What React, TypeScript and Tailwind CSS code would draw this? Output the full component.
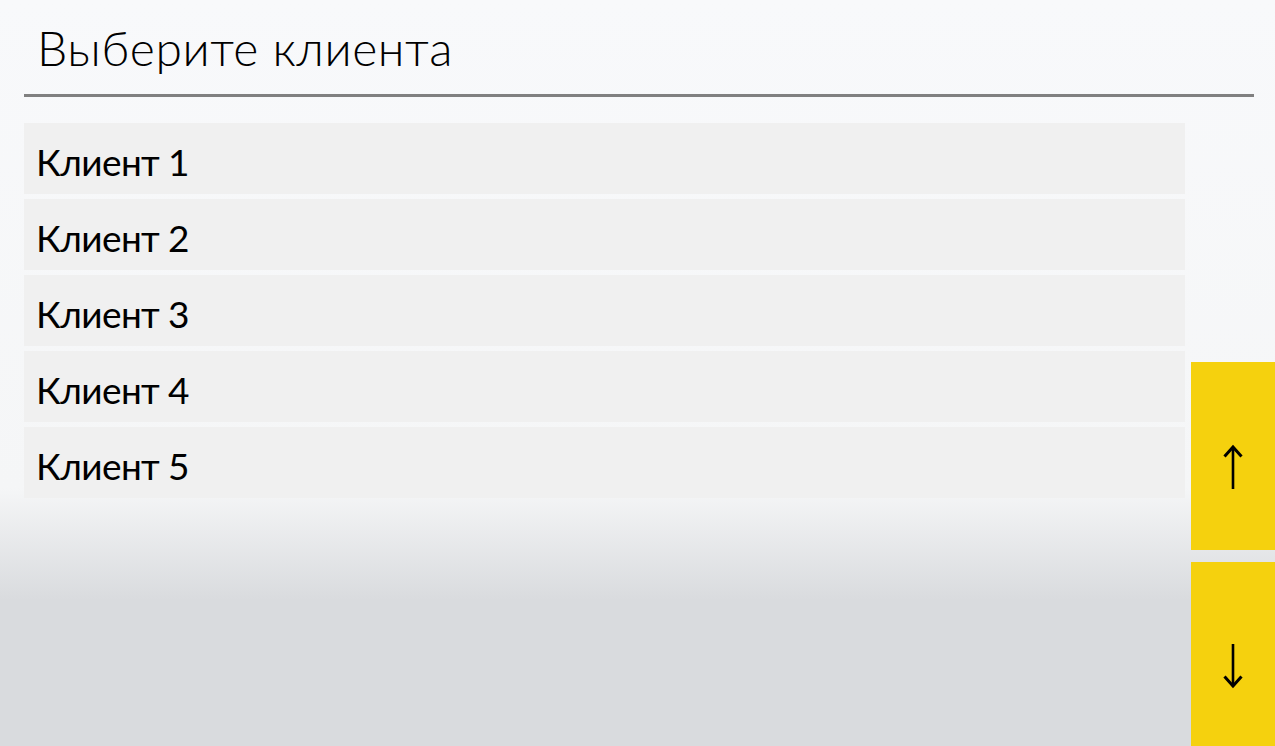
import React from 'react';

const clients = ['Клиент 1', 'Клиент 2', 'Клиент 3', 'Клиент 4', 'Клиент 5'];

const Arrow = ({ down = false }: { down?: boolean }) => (
  <svg width="24" height="46" viewBox="0 0 24 46" className={down ? 'rotate-180' : ''}>
    <path d="M12 3 V45" stroke="#000" strokeWidth={2.6} fill="none" />
    <path d="M3.5 12.5 L12 3 L20.5 12.5" stroke="#000" strokeWidth={3} fill="none" strokeLinejoin="miter" />
  </svg>
);

export default function App() {
  return (
    <div
      className="h-screen w-full overflow-hidden flex flex-col bg-[linear-gradient(to_bottom,#f8f9fb_0px,#f5f6f7_488px,#d9dbde_600px,#d9dbde_746px)] text-black"
      style={{ fontFamily: 'Lato, "Noto Sans", sans-serif' }}
    >
      {/* шапка */}
      <div className="ml-6 mr-[21px] h-[97px] shrink-0 border-b-[3px] border-[#808080] flex items-start">
        <h1 className="pl-[13px] pt-[24px] text-[48px] leading-none font-light tracking-[0.6px]">
          Выберите клиента
        </h1>
      </div>

      <div className="flex-1 flex pt-[26px] min-h-0">
        {/* список */}
        <div className="flex-1 ml-6 flex flex-col gap-[5px]">
          {clients.map((c) => (
            <div key={c} className="h-[71px] shrink-0 bg-[#f0f0f0] flex items-center pl-3 pt-[6px]">
              <span className="text-[37px] leading-none tracking-[-0.6px]">{c}</span>
            </div>
          ))}
        </div>

        {/* кнопки прокрутки */}
        <div className="w-[84px] ml-[6px] flex flex-col justify-end gap-3">
          <button className="h-[188px] bg-[#f5d10e] flex items-center justify-center pt-[22px]">
            <Arrow />
          </button>
          <button className="h-[184px] bg-[#f5d10e] flex items-center justify-center pt-[24px]">
            <Arrow down />
          </button>
        </div>
      </div>
    </div>
  );
}
